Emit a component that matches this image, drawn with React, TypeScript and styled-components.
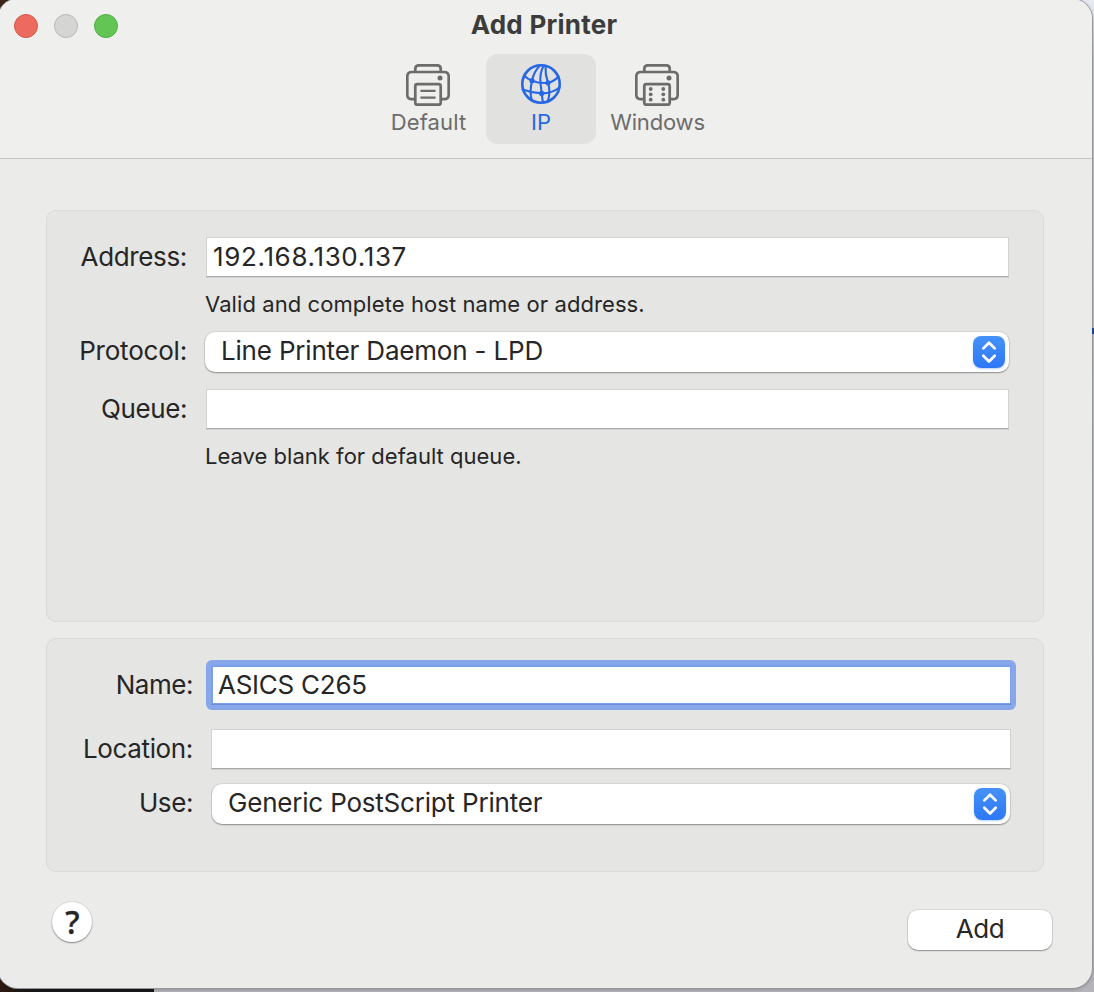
import React from "react";
import styled, { createGlobalStyle } from "styled-components";

const GlobalStyle = createGlobalStyle`
  html, body { margin: 0; padding: 0; }
  body {
    width: 1094px;
    height: 992px;
    overflow: hidden;
    font-family: Inter, "Liberation Sans", sans-serif;
    color: #262626;
  }
  * { box-sizing: border-box; }
`;

const Desktop = styled.div`
  position: relative;
  width: 1094px;
  height: 992px;
  overflow: hidden;
  background:
    linear-gradient(90deg, #2c1a10, #17171a 40px) 0 970px / 154px 22px no-repeat,
    linear-gradient(#3b2418, #3b2418) 0 0 / 40px 40px no-repeat,
    linear-gradient(#e9ebf3 0, #c4c8d0 60px, #bcbec4 400px, #b4b4ba 100%);
`;

const BackgroundAccent = styled.span`
  position: absolute;
  top: 328px;
  right: 0;
  width: 2px;
  height: 6px;
  background: #1b4590;
`;

const Window = styled.main`
  width: 1094px;
  height: 989px;
  margin: 0 0 0 -2px;
  display: flex;
  flex-direction: column;
  background: #ebebe9;
  border-radius: 20px;
  overflow: hidden;
  box-shadow: 0 0 0 1px #97979b, 0 1px 4px rgba(0, 0, 0, 0.3);
  position: relative;
  top: -1px;
`;

const Header = styled.header`
  height: 160px;
  flex: none;
  background: #efefed;
  border-bottom: 1px solid #c6c6c5;
  display: grid;
  grid-template-columns: 1fr auto 1fr;
  grid-template-rows: 55px 90px;
`;

const Lights = styled.div`
  display: flex;
  gap: 16px;
  padding: 15px 0 0 16px;
`;

const Light = styled.span<{ $fill: string; $edge: string }>`
  width: 24px;
  height: 24px;
  border-radius: 50%;
  background: ${(p) => p.$fill};
  border: 1px solid ${(p) => p.$edge};
`;

const Text = styled.span<{ $track?: number }>`
  letter-spacing: ${(p) => p.$track ?? 0}px;
  white-space: nowrap;
`;

const Title = styled.h1`
  margin: 0;
  padding: 10px 2px 0 0;
  font-size: 26px;
  line-height: 32px;
  font-weight: 700;
  color: #3c3c3c;
  text-align: center;
`;

const Tabs = styled.nav`
  grid-column: 1 / -1;
  display: flex;
  padding-left: 374px;
  gap: 2px;
`;

const Tab = styled.button<{ $active?: boolean; $width: number }>`
  width: ${(p) => p.$width}px;
  height: 90px;
  padding: 10px 0 0;
  border: 0;
  border-radius: 12px;
  display: flex;
  flex-direction: column;
  align-items: center;
  justify-content: flex-start;
  font-family: inherit;
  font-size: 22px;
  line-height: 28px;
  color: ${(p) => (p.$active ? "#2567e4" : "#6c6c6b")};
  background: ${(p) => (p.$active ? "#e1e1df" : "transparent")};
  svg { display: block; flex: none; margin: 0 0 2px; }
`;

const TabText = styled(Text)`
  padding-left: 1px;
`;

const Body = styled.div`
  flex: 1;
  padding: 51px 48px 0 48px;
  display: flex;
  flex-direction: column;
`;

const Group = styled.section<{ $height: number; $labels: number }>`
  height: ${(p) => p.$height}px;
  margin-bottom: 16px;
  background: #e5e5e3;
  border: 1px solid #dadad8;
  border-radius: 10px;
  display: grid;
  grid-template-columns: ${(p) => p.$labels}px 1fr;
  align-content: start;
`;

const Label = styled.label<{ $top: number }>`
  padding: ${(p) => p.$top}px 1px 0 0;
  text-align: right;
  font-size: 26px;
  line-height: 32px;
`;

const Slot = styled.div<{ $height: number; $left: number; $top?: number }>`
  height: ${(p) => p.$height}px;
  padding: ${(p) => p.$top ?? 0}px 0 0 ${(p) => p.$left}px;
`;

const Field = styled.div<{ $width: number }>`
  width: ${(p) => p.$width}px;
  height: 40px;
  background: #fff;
  border: 1px solid #d2d2d1;
  border-bottom-color: #a9a9a9;
  box-shadow: 0 1px 0 #cfcfce;
  padding: 3px 0 0 6px;
  font-size: 26px;
  line-height: 32px;
`;

const FocusField = styled.div`
  width: 810px;
  height: 50px;
  border-radius: 6px;
  background: #87a7ea;
  padding: 5px;
`;

const FocusInner = styled.div`
  height: 39px;
  background: #fff;
  border: solid #7c9fea;
  border-width: 2px 1px 1px 2px;
  box-shadow: 0 1px 0 #6b8dd3;
  padding: 2px 0 0 5px;
  font-size: 26px;
  line-height: 32px;
`;

const Hint = styled.p`
  margin: 13px 0 0 -1px;
  font-size: 22px;
  line-height: 28px;
`;

const Popup = styled.div<{ $width: number }>`
  width: ${(p) => p.$width}px;
  height: 40px;
  border-radius: 10px;
  background: #fff;
  box-shadow: 0 0 0 1px rgba(0, 0, 0, 0.06), 0 1px 1.5px rgba(0, 0, 0, 0.35);
  display: flex;
  justify-content: space-between;
  padding: 4px 4px 0 16px;
  font-size: 26px;
  line-height: 30px;
`;

const Stepper = styled.span`
  width: 32px;
  height: 32px;
  border-radius: 8px;
  background: linear-gradient(#4692fa, #2d77f6);
  box-shadow: 0 1px 2px rgba(45, 119, 246, 0.35);
  svg { display: block; }
`;

const Footer = styled.footer`
  display: flex;
  justify-content: space-between;
  padding: 14px 0 0 6px;
  margin-right: -8px;
`;

const Help = styled.button`
  width: 40px;
  height: 40px;
  padding: 0 0 0 1px;
  border: 0;
  border-radius: 50%;
  background: #fff;
  box-shadow: 0 0 0 1px rgba(0, 0, 0, 0.06), 0 1px 1.5px rgba(0, 0, 0, 0.4);
  font: 500 32px/40px "Noto Sans", sans-serif;
  -webkit-text-stroke: 0.4px #262626;
  color: #262626;
`;

const AddButton = styled.button`
  width: 144px;
  height: 40px;
  margin-top: 8px;
  padding: 0 0 2px;
  border: 0;
  border-radius: 10px;
  background: #fff;
  box-shadow: 0 0 0 1px rgba(0, 0, 0, 0.06), 0 1px 1.5px rgba(0, 0, 0, 0.35);
  font: 400 26px/38px Inter, sans-serif;
  color: #262626;
`;

const Printer = ({ dots }: { dots?: boolean }) => (
  <svg width="44" height="42" viewBox="0 0 44 42" fill="none" stroke="currentColor" strokeWidth="2.7" strokeLinecap="round" strokeLinejoin="round">
    <path d="M9.3 7V4.8Q9.3 1.3 12.8 1.3H31.2Q34.7 1.3 34.7 4.8V7" />
    <path d="M8.5 35.2H5.8Q1.3 35.2 1.3 30.7V12.5Q1.3 8 5.8 8H38.2Q42.7 8 42.7 12.5V30.7Q42.7 35.2 38.2 35.2H35.5" />
    <rect x="9.3" y="20.2" width="25.4" height="20.5" rx="2" />
    <circle cx="34" cy="14" r="2.5" fill="currentColor" stroke="none" />
    {dots ? (
      <g fill="currentColor" stroke="none">
        {[25, 30.3, 35.7].map((y) => (
          <React.Fragment key={y}>
            <circle cx="15.7" cy={y} r="1.9" />
            <circle cx="28.3" cy={y} r="1.9" />
          </React.Fragment>
        ))}
      </g>
    ) : (
      <path d="M15.2 26.8H28.8M15.2 33.6H28.8" strokeWidth="2.2" />
    )}
  </svg>
);

const Globe = () => (
  <svg width="42" height="42" viewBox="-21 -20 42 42" fill="none" stroke="currentColor" strokeWidth="2.1" strokeLinecap="round">
    <circle r="18.7" strokeWidth="2.6" />
    <path d="M-1.5 -18C-5.5 -14 -8 -8 -9 -3.3C-10.5 3 -11 9 -9.5 15.5" />
    <path d="M2.5 -18C-0.5 -13 -1 -6 -0.4 0C0 4 0.5 7 0.7 9.4L1.8 18" />
    <path d="M4.5 -18C4.2 -12 5.3 -6 7 -1.2C9 5 9 10 7 16.5" />
    <path d="M-17 -8.5Q-13.5 -5 -9 -3.3Q-2 -0.5 7 -1.2Q13 -2.5 17.5 -7.5" />
    <path d="M-18.5 5.5Q-9 9 0.7 9.4Q11 9.5 18.5 3.5" />
    <g fill="currentColor" stroke="none">
      <circle cx="-9" cy="-3.3" r="2.6" />
      <circle cx="7" cy="-1.2" r="2.6" />
      <circle cx="0.7" cy="9.4" r="2.6" />
    </g>
  </svg>
);

const Chevrons = () => (
  <Stepper>
    <svg width="32" height="32" viewBox="0 0 32 32" fill="none" stroke="#fff" strokeWidth="2.7" strokeLinecap="round" strokeLinejoin="round">
      <path d="M10.3 12.4L16 6.7L21.7 12.4M10.3 19.8L16 25.5L21.7 19.8" />
    </svg>
  </Stepper>
);

export default function App() {
  return (
    <Desktop>
      <GlobalStyle />
      <Window>
        <Header>
          <Lights>
            <Light $fill="#ed6a5e" $edge="#d6574c" />
            <Light $fill="#d5d5d4" $edge="#b9b9b8" />
            <Light $fill="#62c554" $edge="#51ab43" />
          </Lights>
          <Title><Text $track={0.25}>Add Printer</Text></Title>
          <Tabs>
            <Tab $width={112}><Printer /><TabText $track={0.1}>Default</TabText></Tab>
            <Tab $width={110} $active><Globe /><Text>IP</Text></Tab>
            <Tab $width={118}><Printer dots /><TabText $track={-0.18}>Windows</TabText></Tab>
          </Tabs>
        </Header>
        <Body>
          <Group $height={412} $labels={141}>
            <Label $top={30}><Text $track={-0.35}>Address:</Text></Label>
            <Slot $height={121} $left={18} $top={26}>
              <Field $width={803}><Text $track={0.65}>192.168.130.137</Text></Field>
              <Hint><Text $track={0.08}>Valid and complete host name or address.</Text></Hint>
            </Slot>
            <Label $top={3}><Text $track={-0.2}>Protocol:</Text></Label>
            <Slot $height={57} $left={17}>
              <Popup $width={804}><Text $track={-0.19}>Line Printer Daemon - LPD</Text><Chevrons /></Popup>
            </Slot>
            <Label $top={4}><Text $track={-0.4}>Queue:</Text></Label>
            <Slot $height={100} $left={18}>
              <Field $width={803} />
              <Hint><Text $track={0.02}>Leave blank for default queue.</Text></Hint>
            </Slot>
          </Group>
          <Group $height={234} $labels={147}>
            <Label $top={30}><Text $track={-0.45}>Name:</Text></Label>
            <Slot $height={90} $left={12} $top={21}>
              <FocusField><FocusInner><Text $track={-0.25}>ASICS C265</Text></FocusInner></FocusField>
            </Slot>
            <Label $top={4}><Text $track={-0.35}>Location:</Text></Label>
            <Slot $height={55} $left={17}>
              <Field $width={800} />
            </Slot>
            <Label $top={3}><Text $track={-0.4}>Use:</Text></Label>
            <Slot $height={50} $left={18}>
              <Popup $width={798}><Text $track={-0.2}>Generic PostScript Printer</Text><Chevrons /></Popup>
            </Slot>
          </Group>
          <Footer>
            <Help aria-label="Help">?</Help>
            <AddButton><Text $track={-0.5}>Add</Text></AddButton>
          </Footer>
        </Body>
      </Window>
      <BackgroundAccent />
    </Desktop>
  );
}
